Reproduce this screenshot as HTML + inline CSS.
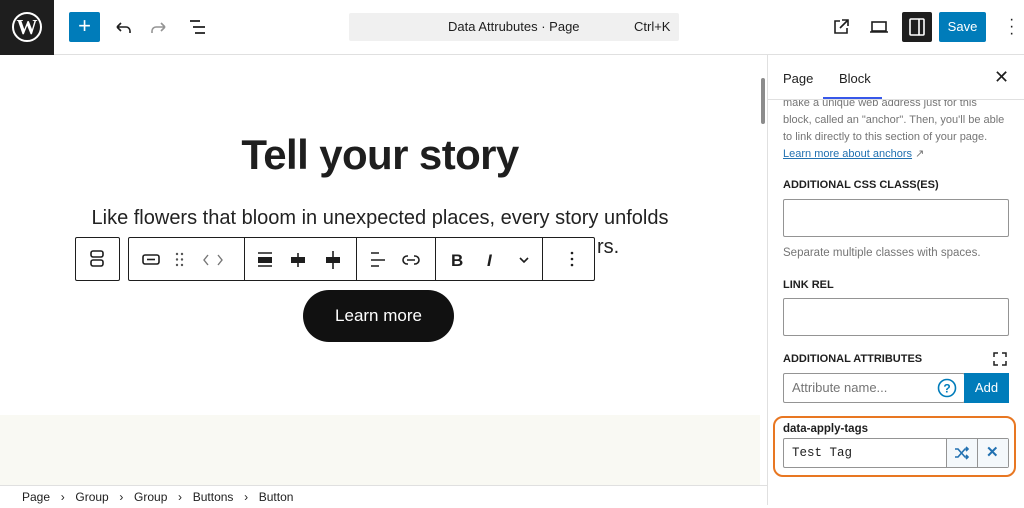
<!DOCTYPE html>
<html><head><meta charset="utf-8"><style>
*{box-sizing:border-box;margin:0;padding:0}
body{width:1024px;height:505px;overflow:hidden;background:#fff;font-family:"Liberation Sans",sans-serif;color:#1e1e1e;position:relative}
.a{position:absolute}
.lbl{font-size:11px;font-weight:bold;text-transform:uppercase;color:#1e1e1e}
.inp{border:1px solid #949494;border-radius:2px;background:#fff}
.tb{border:1px solid #1e1e1e;background:#fff;border-radius:2px}
.sep{position:absolute;top:0;bottom:0;width:1px;background:#1e1e1e}
svg{position:absolute}
</style></head><body>
<div class="a" style="left:0;top:0;width:1024px;height:55px;border-bottom:1px solid #e0e0e0"></div>
<div class="a" style="left:0;top:0;width:54px;height:55px;background:#1e1e1e"></div>
<svg style="left:11px;top:11px" width="32" height="32" viewBox="0 0 32 32"><circle cx="16" cy="16" r="14" fill="none" stroke="#fff" stroke-width="2"/><text x="16" y="23" font-family="Liberation Serif" font-size="21" font-weight="bold" fill="#fff" text-anchor="middle">W</text></svg>
<div class="a" style="left:69px;top:12px;width:31px;height:30px;background:#007cba;border-radius:2px;color:#fff;font-size:22px;text-align:center;line-height:28px">+</div>
<svg style="left:113px;top:17px" width="20" height="20" viewBox="0 0 20 20"><path d="M4 10h9a4 4 0 0 1 4 4v2M4 10l4-4M4 10l4 4" fill="none" stroke="#1e1e1e" stroke-width="1.6"/></svg>
<svg style="left:149px;top:17px" width="20" height="20" viewBox="0 0 20 20"><path d="M16 10H7a4 4 0 0 0-4 4v2M16 10l-4-4M16 10l-4 4" fill="none" stroke="#949494" stroke-width="1.6"/></svg>
<svg style="left:187px;top:17px" width="22" height="20" viewBox="0 0 22 20"><path d="M3 4h10M6 10h12M8 16h10" stroke="#1e1e1e" stroke-width="1.8"/></svg>
<div class="a" style="left:349px;top:13px;width:330px;height:28px;background:#f0f0f0;border-radius:2px;font-size:13px;line-height:28px"><span class="a" style="left:99px">Data Attrubutes · Page</span><span class="a" style="left:285px">Ctrl+K</span></div>
<svg style="left:831px;top:17px" width="20" height="20" viewBox="0 0 20 20"><path d="M9 4H4v12h12v-5M11 3h6v6M17 3l-8 8" fill="none" stroke="#1e1e1e" stroke-width="1.6"/></svg>
<svg style="left:868px;top:17px" width="22" height="20" viewBox="0 0 22 20"><rect x="4" y="5" width="14" height="9" fill="none" stroke="#1e1e1e" stroke-width="1.6"/><path d="M2 15h18" stroke="#1e1e1e" stroke-width="1.6"/></svg>
<div class="a" style="left:902px;top:12px;width:30px;height:30px;background:#1e1e1e;border-radius:2px"></div>
<svg style="left:906px;top:16px" width="22" height="22" viewBox="0 0 22 22"><rect x="4" y="3" width="14" height="16" rx="1" fill="none" stroke="#fff" stroke-width="1.6"/><path d="M13 3v16" stroke="#fff" stroke-width="1.6"/></svg>
<div class="a" style="left:939px;top:12px;width:47px;height:30px;background:#007cba;border-radius:2px;color:#fff;font-size:13px;text-align:center;line-height:30px">Save</div>
<div class="a" style="left:1009px;top:16px;font-size:16px;line-height:7px;color:#1e1e1e">·<br>·<br>·</div>
<div class="a" style="left:0;top:415px;width:760px;height:70px;background:#f9f9f3"></div>
<div class="a" style="left:761px;top:78px;width:4px;height:46px;background:#8c8c8c;border-radius:2px"></div>
<div class="a" style="left:0;top:131px;width:760px;text-align:center;font-size:42px;font-weight:bold;letter-spacing:-0.6px">Tell your story</div>
<div class="a" style="left:0;top:207px;width:760px;text-align:center;font-size:20px;color:#222">Like flowers that bloom in unexpected places, every story unfolds</div>
<div class="a" style="left:597px;top:236px;font-size:20px;color:#222">rs.</div>
<div class="a tb" style="left:75px;top:237px;width:45px;height:44px"></div>
<svg style="left:87px;top:248px" width="20" height="22" viewBox="0 0 20 22"><rect x="4" y="3" width="12" height="6" rx="2" fill="none" stroke="#1e1e1e" stroke-width="1.6"/><rect x="4" y="12" width="12" height="6" rx="2" fill="none" stroke="#1e1e1e" stroke-width="1.6"/></svg>
<div class="a tb" style="left:128px;top:237px;width:467px;height:44px">
<div class="sep" style="left:115px"></div><div class="sep" style="left:227px"></div><div class="sep" style="left:306px"></div><div class="sep" style="left:413px"></div>
</div>
<svg style="left:140px;top:249px" width="450" height="22" viewBox="0 0 450 22">
<rect x="3" y="6" width="16" height="9" rx="2" fill="none" stroke="#1e1e1e" stroke-width="1.6"/><path d="M7 10.5h8" stroke="#1e1e1e" stroke-width="1.6"/>
<g fill="#555"><circle cx="37" cy="5" r="1.2"/><circle cx="42" cy="5" r="1.2"/><circle cx="37" cy="10.5" r="1.2"/><circle cx="42" cy="10.5" r="1.2"/><circle cx="37" cy="16" r="1.2"/><circle cx="42" cy="16" r="1.2"/></g>
<path d="M68 6l-4 5 4 5M78 6l4 5-4 5" fill="none" stroke="#777" stroke-width="1.4"/>
<path d="M118 4h14M118 17h14" stroke="#1e1e1e" stroke-width="1.6"/><rect x="118" y="8" width="14" height="6" fill="#1e1e1e"/>
<path d="M158 4v14" stroke="#1e1e1e" stroke-width="1.6"/><rect x="151" y="8" width="14" height="6" fill="#1e1e1e"/>
<path d="M193 2v18" stroke="#1e1e1e" stroke-width="1.6"/><rect x="186" y="8" width="14" height="6" fill="#1e1e1e"/>
<path d="M231 4h8M231 11h14M231 17h8" stroke="#1e1e1e" stroke-width="1.6"/>
<path d="M268 7h-1a4 4 0 0 0 0 8h1M274 7h1a4 4 0 0 1 0 8h-1M267 11h8" fill="none" stroke="#1e1e1e" stroke-width="1.6"/>
<text x="311" y="17" font-size="17" font-weight="bold" font-family="Liberation Sans" fill="#1e1e1e">B</text>
<text x="347" y="17" font-size="17" font-style="italic" font-weight="bold" font-family="Liberation Sans" fill="#1e1e1e">I</text>
<path d="M380 9l4 4 4-4" fill="none" stroke="#1e1e1e" stroke-width="1.6"/>
<g fill="#1e1e1e"><circle cx="432" cy="4" r="1.3"/><circle cx="432" cy="10" r="1.3"/><circle cx="432" cy="16" r="1.3"/></g>
</svg>
<div class="a" style="left:303px;top:290px;width:151px;height:52px;background:#111;border-radius:26px;color:#fff;font-size:17px;text-align:center;line-height:52px">Learn more</div>
<div class="a" style="left:0;top:485px;width:768px;height:20px;border-top:1px solid #e0e0e0;font-size:12px;line-height:22px;padding-left:22px;word-spacing:2px">Page &nbsp;›&nbsp; Group &nbsp;›&nbsp; Group &nbsp;›&nbsp; Buttons &nbsp;›&nbsp; Button</div>
<div class="a" style="left:767px;top:55px;width:1px;height:450px;background:#e0e0e0"></div>
<div class="a" style="left:783px;top:95px;width:235px;font-size:11px;line-height:17px;color:#757575;white-space:nowrap">make a unique web address just for this<br>block, called an "anchor". Then, you'll be able<br>to link directly to this section of your page.<br><span style="color:#2271b1;text-decoration:underline">Learn more about anchors</span> ↗</div>
<div class="a" style="left:768px;top:56px;width:256px;height:43px;background:#fff"></div>
<div class="a" style="left:768px;top:99px;width:256px;height:1px;background:#e0e0e0"></div>
<div class="a" style="left:783px;top:71px;font-size:13px">Page</div>
<div class="a" style="left:839px;top:71px;font-size:13px">Block</div>
<div class="a" style="left:823px;top:97px;width:59px;height:2px;background:#3858e9"></div>
<div class="a" style="left:994px;top:67px;font-size:18px">✕</div>
<div class="a lbl" style="left:783px;top:179px">Additional CSS class(es)</div>
<div class="a inp" style="left:783px;top:199px;width:226px;height:38px"></div>
<div class="a" style="left:783px;top:247px;font-size:11.5px;color:#757575">Separate multiple classes with spaces.</div>
<div class="a lbl" style="left:783px;top:279px">Link rel</div>
<div class="a inp" style="left:783px;top:298px;width:226px;height:38px"></div>
<div class="a lbl" style="left:783px;top:353px">Additional attributes</div>
<svg style="left:993px;top:352px" width="14" height="14" viewBox="0 0 14 14"><path d="M1 5V1h4M9 1h4v4M13 9v4H9M5 13H1V9" fill="none" stroke="#1e1e1e" stroke-width="1.5"/></svg>
<div class="a inp" style="left:783px;top:373px;width:182px;height:30px;font-size:13px;color:#757575;line-height:28px;padding-left:8px">Attribute name...</div>
<svg style="left:937px;top:378px" width="20" height="20" viewBox="0 0 20 20"><circle cx="10" cy="10" r="8.5" fill="none" stroke="#007cba" stroke-width="1.6"/><text x="10" y="14.5" font-size="12" font-weight="bold" fill="#007cba" text-anchor="middle" font-family="Liberation Sans">?</text></svg>
<div class="a" style="left:964px;top:373px;width:45px;height:30px;background:#007cba;color:#fff;font-size:13px;text-align:center;line-height:30px">Add</div>
<div class="a" style="left:773px;top:416px;width:243px;height:61px;border:2px solid #e87722;border-radius:10px"></div>
<div class="a" style="left:783px;top:423px;font-size:11.5px;font-weight:bold">data-apply-tags</div>
<div class="a inp" style="left:783px;top:438px;width:226px;height:30px;font-family:'Liberation Mono',monospace;font-size:12.5px;line-height:28px;padding-left:8px">Test Tag</div>
<div class="a" style="left:947px;top:439px;width:61px;height:28px;background:#f4f8fb"></div>
<div class="a" style="left:946px;top:438px;width:1px;height:30px;background:#949494"></div>
<div class="a" style="left:977px;top:438px;width:1px;height:30px;background:#949494"></div>
<svg style="left:953px;top:444px" width="18" height="18" viewBox="0 0 18 18"><path d="M2 5h3l7 8h3M2 13h3l7-8h3M13 3l2 2-2 2M13 11l2 2-2 2" fill="none" stroke="#2271b1" stroke-width="1.6"/></svg>
<div class="a" style="left:986px;top:443px;font-size:15px;color:#2271b1;font-weight:bold">✕</div>
</body></html>
